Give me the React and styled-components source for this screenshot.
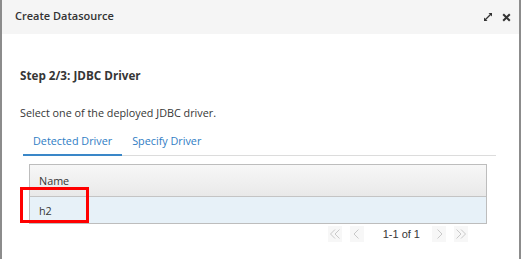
import React from "react";
import styled, { createGlobalStyle } from "styled-components";

const GlobalStyle = createGlobalStyle`
  html, body {
    margin: 0;
    padding: 0;
    background: #ffffff;
  }
  body {
    font-family: "Open Sans", "Liberation Sans", sans-serif;
    color: #363636;
  }
`;

const Modal = styled.div`
  width: 521px;
  height: 259px;
  box-sizing: border-box;
  border-left: 2px solid #8c8c8c;
  border-right: 2px solid #8c8c8c;
  background: #fff;
  overflow: hidden;
`;

const Header = styled.div`
  height: 34px;
  background: #f5f5f5;
  display: flex;
  align-items: center;
  justify-content: space-between;
  padding: 0 8px 0 13px;
`;

const Title = styled.div`
  font-size: 11px;
  font-weight: 600;
  color: #333;
  margin-top: -4px;
`;

const Actions = styled.div`
  display: flex;
  align-items: center;
  gap: 9px;
  margin-top: 0;
`;

const Body = styled.div`
  padding: 32px 23px 0 18px;
`;

const StepTitle = styled.h2`
  margin: 0;
  font-size: 11.7px;
  font-weight: 700;
  color: #363636;
  line-height: 18px;
`;

const Desc = styled.p`
  margin: 21px 0 0;
  font-size: 10.8px;
  line-height: 16px;
  color: #363636;
`;

const Tabs = styled.div`
  display: flex;
  margin: 9px 0 0 3px;
  border-bottom: 1px solid #dcdcdc;
`;

const Tab = styled.div`
  font-size: 10.8px;
  line-height: 16px;
  color: #2f7dc4;
  padding: 3px 10px 5px;
  margin-bottom: -1px;
  border-bottom: 2px solid ${({ $active }) => ($active ? "#3a87c8" : "transparent")};
`;

const TableWrap = styled.div`
  position: relative;
  margin: 8px 9px 0 9px;
`;

const Table = styled.div`
  border: 1px solid #bdbdbd;
`;

const HeadRow = styled.div`
  height: 32px;
  background: linear-gradient(#f7f7f7, #e9e9e9);
  border-bottom: 1px solid #c4c4c4;
  display: flex;
  align-items: center;
  padding: 0 0 1px 9px;
  box-sizing: border-box;
  font-size: 10.8px;
  color: #363636;
`;

const Row = styled.div`
  height: 26px;
  background: #e7f1f8;
  display: flex;
  align-items: center;
  padding-left: 9px;
  font-size: 10.8px;
  color: #363636;
`;

const Highlight = styled.div`
  position: absolute;
  left: -9px;
  top: 23px;
  width: 63px;
  height: 30px;
  border: 3px solid #ff0000;
`;

const Pager = styled.div`
  display: flex;
  justify-content: flex-end;
  align-items: center;
  margin: 2px 28px 0 0;
  font-family: "Liberation Sans", Arial, sans-serif;
  font-size: 11px;
  color: #363636;
`;

const PageBtn = styled.span`
  width: 14px;
  height: 16px;
  display: flex;
  align-items: center;
  justify-content: center;
  background: #f7f7f7;
  margin-left: ${({ $gap }) => $gap || 0}px;
`;

const PageInfo = styled.span`
  margin: 0 12px 0 19px;
`;

const Chevron = ({ dir = "left", double }) => {
  const flip = dir === "right" ? "scale(-1,1) translate(-12,0)" : undefined;
  return (
    <svg width="12" height="12" viewBox="0 0 12 12">
      <g transform={flip} fill="none" stroke="#c9c9c9" strokeWidth="1">
        {double ? (
          <>
            <path d="M6 1.5 L1.5 6 L6 10.5" />
            <path d="M10.5 1.5 L6 6 L10.5 10.5" />
          </>
        ) : (
          <path d="M7.5 1.5 L3 6 L7.5 10.5" />
        )}
      </g>
    </svg>
  );
};

const ExpandIcon = () => (
  <svg width="10" height="10" viewBox="0 0 10 10">
    <path d="M1.5 8.5 L8.5 1.5" stroke="#333" strokeWidth="1.2" />
    <path d="M5.5 1 H9 V4.5 Z" fill="#333" />
    <path d="M1 5.5 V9 H4.5 Z" fill="#333" />
  </svg>
);

const CloseIcon = () => (
  <svg width="9" height="9" viewBox="0 0 9 9">
    <path d="M1.2 1.2 L7.8 7.8 M7.8 1.2 L1.2 7.8" stroke="#333" strokeWidth="2" />
  </svg>
);

const App = () => {
  return (
    <>
      <GlobalStyle />
      <Modal>
        <Header>
          <Title>Create Datasource</Title>
          <Actions>
            <ExpandIcon />
            <CloseIcon />
          </Actions>
        </Header>
        <Body>
          <StepTitle>Step 2/3: JDBC Driver</StepTitle>
          <Desc>Select one of the deployed JDBC driver.</Desc>
          <Tabs>
            <Tab $active>Detected Driver</Tab>
            <Tab>Specify Driver</Tab>
          </Tabs>
          <TableWrap>
            <Table>
              <HeadRow>Name</HeadRow>
              <Row>h2</Row>
            </Table>
            <Highlight />
          </TableWrap>
          <Pager>
            <PageBtn><Chevron double /></PageBtn>
            <PageBtn $gap={8}><Chevron /></PageBtn>
            <PageInfo>1-1 of 1</PageInfo>
            <PageBtn><Chevron dir="right" /></PageBtn>
            <PageBtn $gap={8}><Chevron dir="right" double /></PageBtn>
          </Pager>
        </Body>
      </Modal>
    </>
  );
};

export default App;
